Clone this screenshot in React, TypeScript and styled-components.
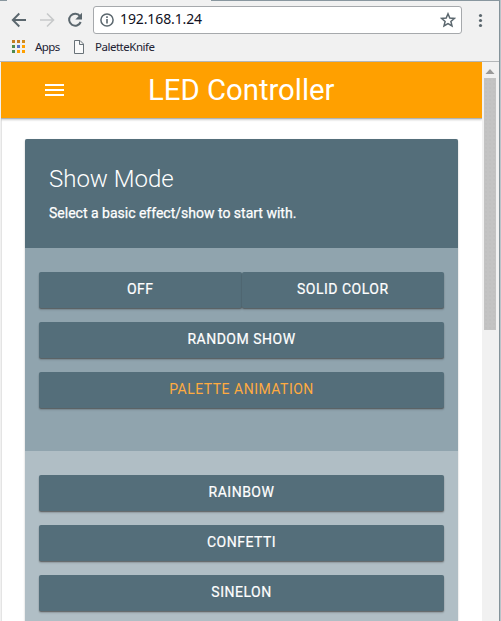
import React from 'react';
import styled, { createGlobalStyle } from 'styled-components';

const GlobalStyle = createGlobalStyle`
  * { box-sizing: border-box; }
  html, body { margin: 0; padding: 0; overflow: hidden; background: #f1f1f1; }
`;

const Window = styled.div`
  width: 501px;
  height: 621px;
  display: flex;
  flex-direction: column;
  overflow: hidden;
  background: #f1f1f1;
  border-right: 1px solid #b9c4c9;
  font-family: Roboto, sans-serif;
`;

const Frame = styled.div`
  flex: 1;
  min-height: 0;
  display: flex;
  flex-direction: column;
  border-right: 1px solid #84939a;
`;

const TabEdge = styled.div`
  height: 1px;
  flex: none;
  background: linear-gradient(to right, #89979f 7px, #f1f1f1 7px, #f1f1f1 211px, #89979f 211px);
`;

const Toolbar = styled.div`
  height: 37px;
  flex: none;
  display: flex;
  align-items: center;
  padding-left: 11px;

  > svg { flex: none; }
`;

const NavIcons = styled.div`
  width: 82px;
  height: 28px;
  flex: none;
`;

const AddressBar = styled.div`
  width: 369px;
  height: 28px;
  flex: none;
  display: flex;
  align-items: center;
  padding: 0 5px 0 6px;
  background: #fff;
  border: 1px solid #a6a9ac;
  border-radius: 3px;
`;

const Url = styled.span`
  flex: 1;
  margin-left: 6px;
  padding-bottom: 2px;
  font: 14px/24px "Noto Sans", sans-serif;
  letter-spacing: -0.11px;
  color: #111122;
`;

const Bookmarks = styled.div`
  height: 23px;
  flex: none;
  display: flex;
  align-items: center;
  padding: 0 0 6px 12px;
  font: 11.5px/18px "Noto Sans", sans-serif;
  color: #222233;
`;

const BookmarkLabel = styled.span<{ $gap: number; $width: number; $spacing: number }>`
  margin-left: ${(p) => p.$gap}px;
  width: ${(p) => p.$width}px;
  letter-spacing: ${(p) => p.$spacing}px;
  white-space: nowrap;
`;

const Viewport = styled.div`
  flex: 1;
  min-height: 0;
  display: flex;
  border-top: 1px solid #b3b6b8;
`;

const Page = styled.main`
  width: 481px;
  margin-left: 1px;
  background: #fff;
  box-shadow: inset 1px 0 #e4e4e4;
  overflow: hidden;
`;

const AppBar = styled.header`
  height: 56px;
  display: flex;
  align-items: center;
  padding-left: 44px;
  background: #ffa000;
  box-shadow: 0 1px 0 #b0b4b6, 0 2px 2px rgba(0, 0, 0, 0.2);
`;

const AppTitle = styled.h1`
  margin: 0 0 0 84px;
  font-size: 29.3px;
  line-height: 56px;
  font-weight: 400;
  color: #fff;
  white-space: nowrap;
`;

const Card = styled.section`
  width: 433px;
  height: 600px;
  margin: 21px 0 0 24px;
  border-radius: 2px;
  overflow: hidden;
  background: #b0bec5;
  box-shadow: 0 1px 2px rgba(0, 0, 0, 0.25);
`;

const CardHeader = styled.div`
  height: 109px;
  padding: 24px;
  background: #546e7a;
  color: #fff;
`;

const CardTitle = styled.h2`
  margin: 0;
  font-size: 24px;
  line-height: 32px;
  font-weight: 300;
`;

const CardText = styled.p`
  margin: 8px 0 0;
  font-size: 14px;
  line-height: 20px;
  font-weight: 400;
  -webkit-text-stroke: 0.25px #fff;
`;

const ButtonGroup = styled.div<{ $height: number; $light?: boolean }>`
  height: ${(p) => p.$height}px;
  padding: 24px 14px 0;
  display: flex;
  flex-direction: column;
  gap: 14px;
  background: ${(p) => (p.$light ? '#b0bec5' : '#90a4ae')};
`;

const ButtonRow = styled.div`
  display: flex;
  height: 36px;
`;

const Button = styled.button<{ $active?: boolean }>`
  flex: 1;
  height: 36px;
  padding: 0 0 2px;
  border: 0;
  border-radius: 2px;
  background: #546e7a;
  color: ${(p) => (p.$active ? '#ffab40' : '#fff')};
  box-shadow: 0 1px 1px rgba(70, 70, 70, 0.65), 0 2px 2px rgba(0, 0, 0, 0.16);
  font: 400 14px/34px Roboto, sans-serif;
  letter-spacing: 0.5px;
  -webkit-text-stroke: ${(p) => (p.$active ? 0 : 0.2)}px currentColor;
  text-transform: uppercase;
`;

const Scrollbar = styled.div`
  width: 17px;
  display: flex;
  flex-direction: column;
  padding: 7px 3px 0 2px;
  background: #f1f1f1;
`;

const ScrollThumb = styled.div`
  width: 12px;
  height: 252px;
  margin-top: 4px;
  background-color: #c3c3c3;
  background-image: radial-gradient(circle, #b9b9b9 0.5px, transparent 0.8px);
  background-size: 4px 4px;
`;

const basicShows = [['Off', 'Solid color'], ['Random show'], ['Palette animation']];
const effects = ['Rainbow', 'Confetti', 'Sinelon'];
const appColors = ['#c67c22', '#c67c22', '#d18b1c', '#4f8a4f', '#5570c6', '#ffa000', '#4f8a4f', '#ffa000', '#ffa000'];

const Navigation = () => (
  <NavIcons>
    <svg width="82" height="28" viewBox="0 0 82 28" fill="none">
      <path d="M15 14H2M8.3 7.5 1.8 14l6.5 6.5" stroke="#5b676e" strokeWidth="1.9" />
      <path d="M29 14h13M36 7.5l6.5 6.5-6.5 6.5" stroke="#c7c9ca" strokeWidth="1.6" />
      <path d="M69 10.2A6 6 0 1 0 69.7 16" stroke="#5b676e" strokeWidth="2" />
      <path d="M71 6.8v6.7h-6.7z" fill="#5b676e" />
    </svg>
  </NavIcons>
);

export default function App() {
  return (
    <>
      <GlobalStyle />
      <Window>
        <TabEdge />
        <Frame>
          <Toolbar>
            <Navigation />
            <AddressBar>
              <svg width="14" height="14" viewBox="0 0 14 14" fill="none">
                <circle cx="7" cy="7" r="6.1" stroke="#5b676e" strokeWidth="1.5" />
                <path d="M7 3.2v1.7M7 6v4.6" stroke="#5b676e" strokeWidth="1.6" />
              </svg>
              <Url>192.168.1.24</Url>
              <svg width="16" height="16" viewBox="0 0 16 16" fill="none">
                <path d="m8 1.8 1.8 4.2 4.6.4-3.5 3 1.1 4.5-4-2.4-4 2.4 1.1-4.5-3.5-3 4.6-.4z" stroke="#5b676e" strokeWidth="1.5" />
              </svg>
            </AddressBar>
            <svg width="36" height="28" viewBox="0 0 36 28" fill="#5b676e">
              <circle cx="18.5" cy="9.5" r="1.6" />
              <circle cx="18.5" cy="14.5" r="1.6" />
              <circle cx="18.5" cy="19.5" r="1.6" />
            </svg>
          </Toolbar>
          <Bookmarks>
            <svg width="13" height="13" viewBox="0 0 13 13">
              {appColors.map((color, i) => (
                <rect key={i} x={(i % 3) * 5} y={Math.floor(i / 3) * 5} width="3" height="3" fill={color} />
              ))}
            </svg>
            <BookmarkLabel $gap={10} $width={39} $spacing={-0.6}>Apps</BookmarkLabel>
            <svg width="10" height="14" viewBox="0 0 10 14" fill="#fafafa" stroke="#697278">
              <path d="M.5.5H6L9.5 4v9.5h-9zM5.5.5v4h4" />
            </svg>
            <BookmarkLabel $gap={11} $width={70} $spacing={-0.48}>PaletteKnife</BookmarkLabel>
          </Bookmarks>
          <Viewport>
            <Page>
              <AppBar>
                <svg width="19" height="12" viewBox="0 0 19 12" fill="#fff">
                  <path d="M0 0h19v2H0zM0 5h19v2H0zM0 10h19v2H0z" />
                </svg>
                <AppTitle>LED Controller</AppTitle>
              </AppBar>
              <Card>
                <CardHeader>
                  <CardTitle>Show Mode</CardTitle>
                  <CardText>Select a basic effect/show to start with.</CardText>
                </CardHeader>
                <ButtonGroup $height={203}>
                  {basicShows.map((row) => (
                    <ButtonRow key={row[0]}>
                      {row.map((label) => (
                        <Button key={label} $active={label === 'Palette animation'}>{label}</Button>
                      ))}
                    </ButtonRow>
                  ))}
                </ButtonGroup>
                <ButtonGroup $height={300} $light>
                  {effects.map((label) => (
                    <ButtonRow key={label}>
                      <Button>{label}</Button>
                    </ButtonRow>
                  ))}
                </ButtonGroup>
              </Card>
            </Page>
            <Scrollbar>
              <svg width="12" height="5" viewBox="0 0 12 5" fill="#999">
                <path d="M6 0 10.5 5h-9z" />
              </svg>
              <ScrollThumb />
            </Scrollbar>
          </Viewport>
        </Frame>
      </Window>
    </>
  );
}
